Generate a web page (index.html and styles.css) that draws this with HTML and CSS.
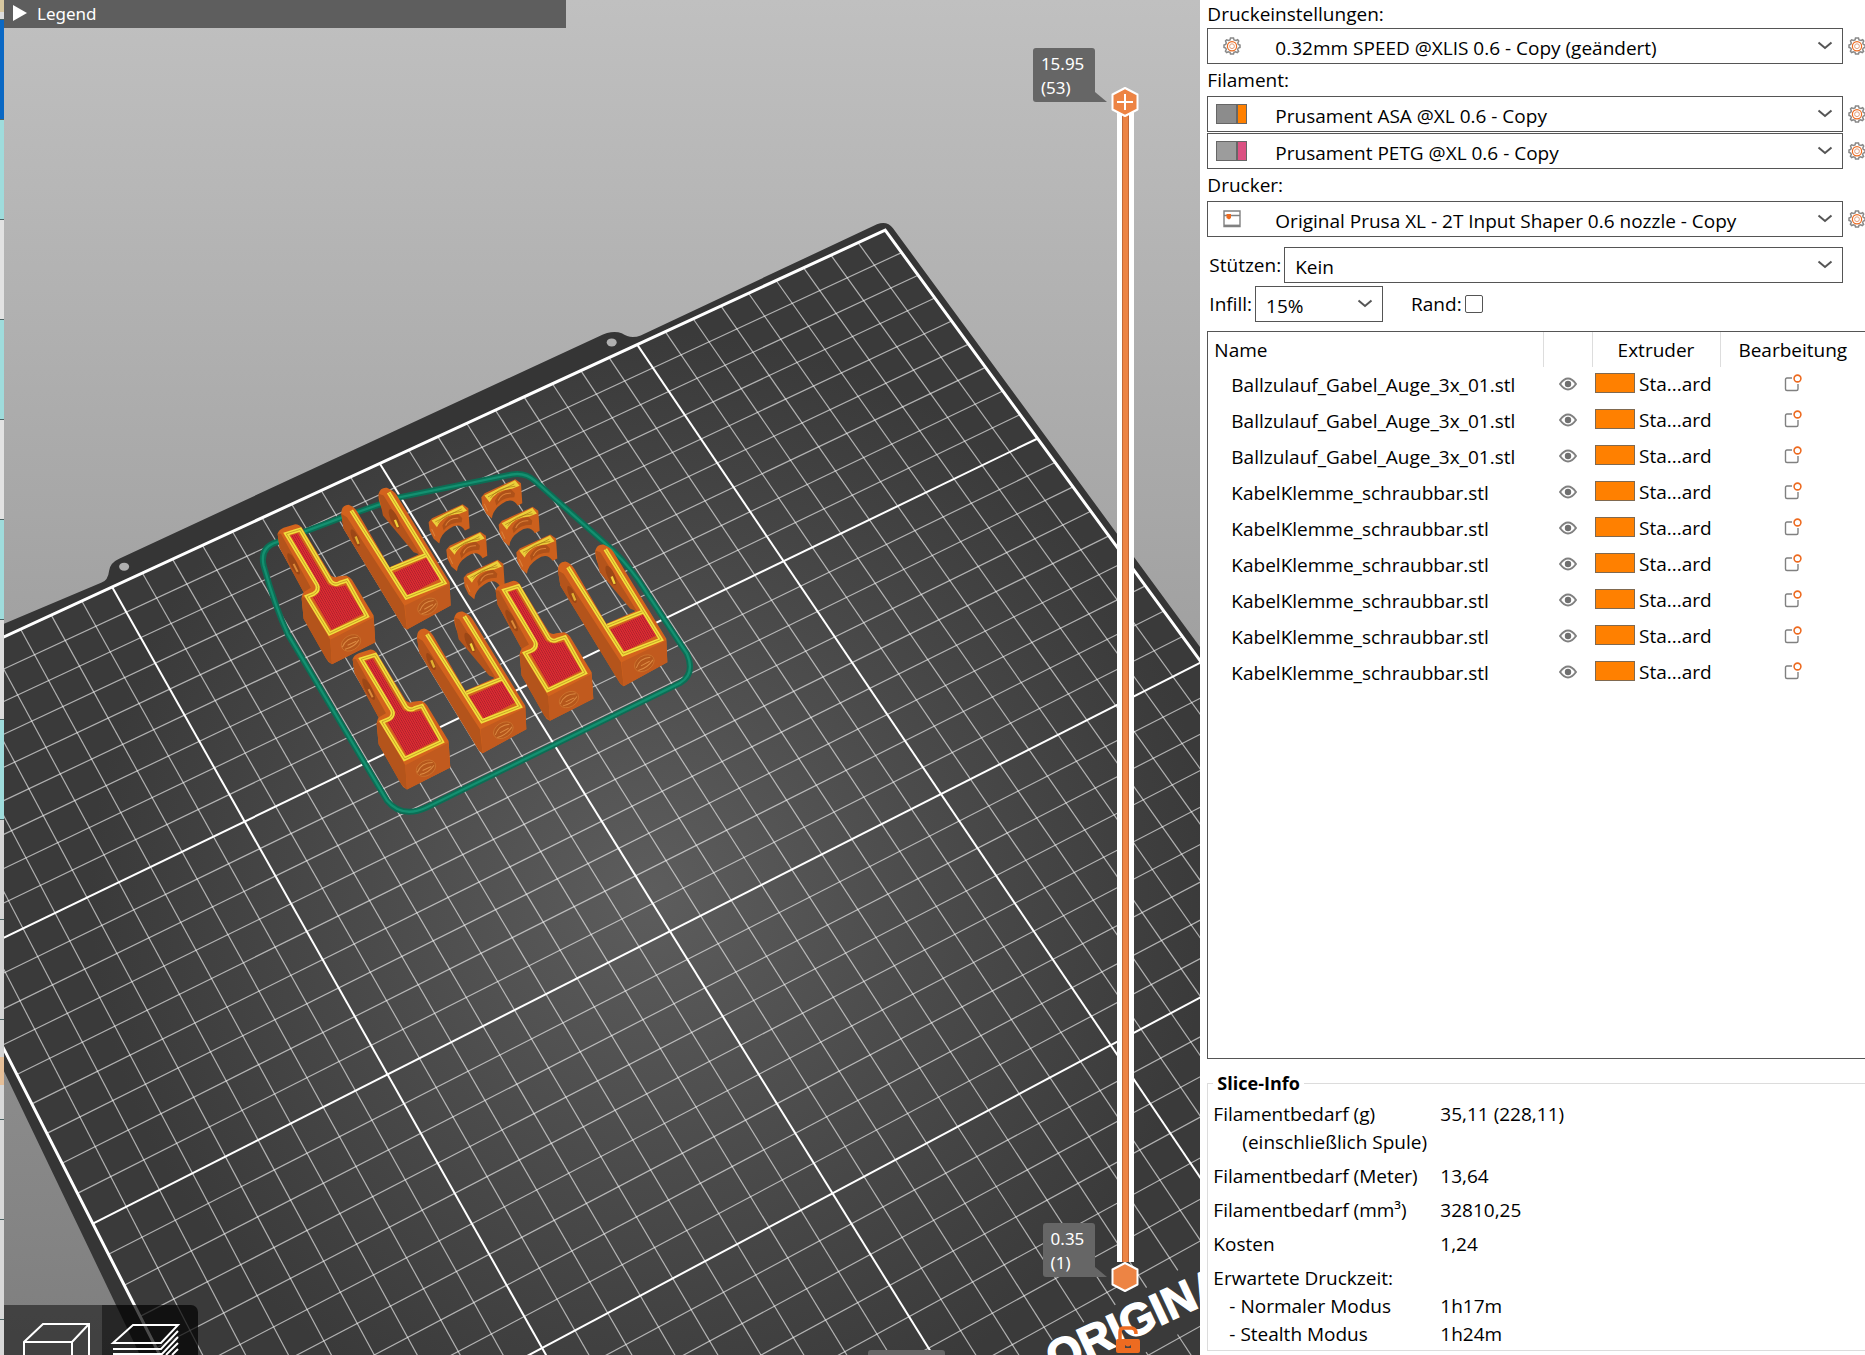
FILE: index.html
```html
<!DOCTYPE html>
<html lang="de">
<head>
    <meta charset="UTF-8">
    <meta name="viewport" content="width=device-width, initial-scale=1.0">
    <title>PrusaSlicer</title>
    <link rel="stylesheet" href="styles.css">
</head>
<body>
    <!-- shared icons -->
    <svg class="icon-defs" aria-hidden="true">
        <symbol id="gear" viewBox="0 0 18 18">
            <path d="M7 3 L7.500 1 h3 L11 3 L13 3.500 L14.700 2.700 L15.700 4 L14.800 6 L15.300 7.500 L17 8 v2.500 L15.300 11 L14.600 12.500 L15.600 14.300 L14.300 15.500 L12.500 14.700 L11 15.300 L10.500 17 h-3 L7 15.300 L5.400 14.700 L3.600 15.500 L2.400 14.200 L3.300 12.500 L2.700 11 L1 10.500 V8 L2.700 7.400 L3.300 6 L2.500 4 L3.600 2.800 L5.500 3.500 Z" fill="#fff" stroke="#888" stroke-width="1.500"/>
            <circle cx="9" cy="9.200" r="4.600" fill="none" stroke="#ed6b21" stroke-width="1.200"/>
            <circle cx="9" cy="9.200" r="2.400" fill="none" stroke="#e0a080" stroke-width="1"/>
        </symbol>
        <symbol id="printer" viewBox="0 0 18 18">
            <path d="M1 1 H17 V16.500 H1 Z M1 5.500 H17" fill="#fff" stroke="#808080" stroke-width="1.400"/>
            <path d="M1 15.800 H17" stroke="#808080" stroke-width="2.400"/>
            <path d="M3.500 4 H8 V8 L6 9.500 L3.500 8 Z" fill="#ed6b21"/>
        </symbol>
        <symbol id="chevron" viewBox="0 0 16 10">
            <path d="M1.500 1.500 L8 7 L14.500 1.500" fill="none" stroke="#555" stroke-width="2"/>
        </symbol>
        <symbol id="eye" viewBox="0 0 18 14">
            <path d="M1 7 Q9 -4 17 7 Q9 18 1 7 Z" fill="#fff" stroke="#808080" stroke-width="2"/>
            <circle cx="9" cy="7" r="3.200" fill="#707070"/>
        </symbol>
        <symbol id="edit" viewBox="0 0 18 18">
            <path d="M8 4 H3 Q1.500 4 1.500 5.500 V15 Q1.500 16.500 3 16.500 H12.500 Q14 16.500 14 15 V10" fill="none" stroke="#808080" stroke-width="1.400"/>
            <circle cx="13.500" cy="4.500" r="3.400" fill="#fff" stroke="#ed6b21" stroke-width="1.600"/>
        </symbol>
    </svg>

    <div class="app">
        <div class="behind"></div>

        <main class="viewport">
            <svg class="scene" viewBox="4 0 1195 1355" preserveAspectRatio="xMinYMin slice" role="img" aria-label="Druckbett">
                <defs>
                    <radialGradient id="bedShade" gradientUnits="userSpaceOnUse" cx="650" cy="890" r="560">
                        <stop offset="0" stop-color="#5d5d5d"/>
                        <stop offset="0.500" stop-color="#4b4b4b"/>
                        <stop offset="1" stop-color="#3a3a3a"/>
                    </radialGradient>
                    <pattern id="infill" width="6" height="6" patternUnits="userSpaceOnUse" patternTransform="rotate(-30)">
                        <rect width="6" height="6" fill="#dd2a33"/>
                        <rect width="2" height="6" fill="#a8242a"/>
                    </pattern>
                    <g id="tongue">
                        <path fill="#d3631d" d="M112 250 Q115 238 130 232 L165 221 Q178 222 185 232 L272 375 Q283 384 293 378 L318 375 Q330 380 335 388 L400 495 L405 575 L275 641 Q262 635 258 625 L190 505 L184 445 Q185 432 190 425 L118 292 Z"/>
                        <path fill="#b4541b" d="M112 250 L122 250 L212 412 L190 425 L118 292 Z M184 440 L195 442 L270 568 L275 641 L258 625 L190 505 Z"/>
                        <path fill="#c15a1e" d="M270 568 L400 500 L405 575 L275 641 Z"/>
                        <ellipse cx="160" cy="340" rx="10" ry="36" transform="rotate(-28 160 340)" fill="#9c4716"/>
                        <path d="M160 340 L172 364" stroke="#dc8a38" stroke-width="6"/>
                        <ellipse cx="332" cy="577" rx="31" ry="22" transform="rotate(-30 332 577)" fill="#b5571c" stroke="#d07a32" stroke-width="2"/>
                        <path d="M306 590 Q318 560 352 560 M314 596 Q342 590 356 568 M322 584 L348 572" fill="none" stroke="#dc8a42" stroke-width="3"/>
                        <path class="rim" d="M138 250 L180 237 L272 393 Q283 406 298 397 L320 390 L380 497 L268 549 L200 438 L220 430 Q238 420 230 402 Z"/>
                        <path class="rim-gap" d="M138 250 L180 237 L272 393 Q283 406 298 397 L320 390 L380 497 L268 549 L200 438 L220 430 Q238 420 230 402 Z"/>
                        <path fill="url(#infill)" d="M151 256 L172 248 L262 400 Q280 416 316 404 L368 490 L274 538 L217 440 Q242 432 240 408 Z"/>
                    </g>
                    <g id="fork">
                        <path fill="#d3631d" d="M303 190 Q302 165 325 163 Q342 168 352 185 L448 350 L535 312 L432 190 Q412 150 415 130 Q420 110 440 112 Q462 122 470 135 L628 395 L631 465 L500 537 L490 530 L310 235 Z"/>
                        <path fill="#b4541b" d="M303 190 L320 200 L492 465 L500 537 L490 530 L310 235 Z M415 130 L430 135 L540 312 L520 305 L428 195 Z"/>
                        <path fill="#c15a1e" d="M494 465 L628 400 L631 465 L500 537 Z"/>
                        <ellipse cx="345" cy="262" rx="9" ry="28" transform="rotate(-25 345 262)" fill="#9c4716"/>
                        <path d="M346 258 L355 280" stroke="#e0b030" stroke-width="7"/>
                        <ellipse cx="462" cy="205" rx="11" ry="32" transform="rotate(-25 462 205)" fill="#9c4716"/>
                        <path d="M464 208 L473 230" stroke="#f0d23a" stroke-width="7"/>
                        <ellipse cx="562" cy="468" rx="32" ry="22" transform="rotate(-32 562 468)" fill="#b5571c" stroke="#d07a32" stroke-width="2"/>
                        <path d="M538 482 Q548 452 580 450 M544 490 Q572 482 588 458 M552 476 L578 462" fill="none" stroke="#dc8a42" stroke-width="3"/>
                        <path fill="url(#infill)" d="M460 367 L562 321 L598 385 L503 434 Z"/>
                        <path class="rim" d="M333 180 L498 441 L612 397 L445 126 M452 356 L556 314"/>
                        <path class="rim-gap" d="M333 180 L498 441 L612 397 L445 126 M452 356 L556 314"/>
                    </g>
                    <g id="clamp">
                        <path fill="#cc601d" d="M723 140 L733 128 L825 86 L842 98 L846 158 L832 165 Q815 138 785 160 Q757 178 755 204 L738 190 L726 165 Z"/>
                        <path fill="#ae5119" d="M764 150 Q778 120 812 116 L824 128 L822 140 Q785 140 768 165 Z"/>
                        <path d="M774 150 Q784 126 812 128 M732 160 L742 182" stroke="#dc8038" stroke-width="3" fill="none"/>
                        <path fill="#ecd03a" d="M732 135 L824 89 L838 106 L815 115 Q765 118 748 155 Z"/>
                        <path d="M743 139 L822 100 M750 143 Q770 112 825 107" stroke="#a67414" stroke-width="2" fill="none"/>
                    </g>
                </defs>

                <path fill="#353535" d="M4 623 L101 582 Q108 580 109 570 Q110 562 119 558 L598 336 Q612 329 621 333 Q630 339 640 335 L876 224 Q886 220 892 228 L1134 558 L1200 648 V1356 H141 L4 1070 Z"/>
                <ellipse cx="124" cy="566" rx="5" ry="4" fill="#b0b0b0"/>
                <ellipse cx="611" cy="342" rx="5" ry="4" fill="#b0b0b0"/>
                <g id="grid"></g>
                <text class="bed-logo" transform="translate(1054 1373) rotate(-25)">ORIGINA</text>

                <g transform="translate(240 450) scale(0.333)">
                    <path class="skirt" d="M70 345 Q58 290 110 275 L300 203 L480 140 L815 72 Q855 65 885 92 L1085 270 Q1150 325 1195 390 L1340 610 Q1365 670 1320 697 L560 1070 Q485 1105 440 1050 L142 550 Q105 470 70 345 Z"/>
                    <path class="skirt-lines" d="M70 345 Q58 290 110 275 L300 203 L480 140 L815 72 Q855 65 885 92 L1085 270 Q1150 325 1195 390 L1340 610 Q1365 670 1320 697 L560 1070 Q485 1105 440 1050 L142 550 Q105 470 70 345 Z"/>
                    <use href="#clamp"/>
                    <use href="#clamp" x="-158" y="75"/>
                    <use href="#clamp" x="52" y="83"/>
                    <use href="#clamp" x="-105" y="158"/>
                    <use href="#clamp" x="105" y="166"/>
                    <use href="#clamp" x="-53" y="242"/>
                    <use href="#tongue"/>
                    <use href="#fork"/>
                    <use href="#tongue" x="654" y="170"/>
                    <use href="#fork" x="650" y="170"/>
                    <use href="#fork" x="227" y="371"/>
                    <use href="#tongue" x="225" y="376"/>
                </g>
            </svg>

            <details class="legend">
                <summary><span class="legend-arrow"></span>Legend</summary>
            </details>

            <div class="layers">
                <div class="track"></div>
                <input type="range" class="layer-range lower" min="1" max="53" value="1" aria-label="Untere Schicht">
                <input type="range" class="layer-range upper" min="1" max="53" value="53" aria-label="Obere Schicht">
                <output class="layer-tip tip-top">15.95<br>(53)</output>
                <output class="layer-tip tip-bottom">0.35<br>(1)</output>
            </div>
            <button class="unlock" aria-label="Entsperren">
                <svg viewBox="0 0 24 28">
                    <path d="M4 15 V6 Q4 2 8 2 H15 Q20 2 20 8" fill="none" stroke="#ed6b21" stroke-width="3.500"/>
                    <rect y="13" width="24" height="14" rx="2" fill="#ed6b21"/>
                    <path d="M9 19 q3 3 6 0 v3 h-6 Z" fill="#444"/>
                </svg>
            </button>
            <div class="moves-handle"></div>

            <div class="view-switch">
                <button aria-label="3D-Ansicht">
                    <svg viewBox="0 0 98 50"><path d="M20 50 V37 L39 19 H85 V50 M20 37 H68 V50 M68 37 L85 19"/></svg>
                </button>
                <button class="active" aria-label="Vorschau">
                    <svg viewBox="0 0 96 50"><path d="M11 38 L31 20 H76 L59 38 Z M11 44 H59 L76 26 M11 49 H60 L76 32 M64 50 L76 38 M70 50 L76 44"/></svg>
                </button>
            </div>
        </main>

        <aside class="sidebar">
            <label for="print">Druckeinstellungen:</label>
            <div class="preset">
                <div class="combo with-icon">
                    <svg class="combo-icon gear"><use href="#gear"/></svg>
                    <select id="print"><option>0.32mm SPEED @XLIS 0.6 - Copy (geändert)</option></select>
                    <svg class="chevron"><use href="#chevron"/></svg>
                </div>
                <button class="edit-preset" aria-label="Bearbeiten"><svg class="gear"><use href="#gear"/></svg></button>
            </div>

            <label for="filament1">Filament:</label>
            <div class="preset">
                <div class="combo with-icon">
                    <span class="combo-icon spool"></span>
                    <select id="filament1"><option>Prusament ASA @XL 0.6 - Copy</option></select>
                    <svg class="chevron"><use href="#chevron"/></svg>
                </div>
                <button class="edit-preset" aria-label="Bearbeiten"><svg class="gear"><use href="#gear"/></svg></button>
            </div>
            <div class="preset">
                <div class="combo with-icon">
                    <span class="combo-icon spool pink"></span>
                    <select id="filament2" aria-label="Filament 2"><option>Prusament PETG @XL 0.6 - Copy</option></select>
                    <svg class="chevron"><use href="#chevron"/></svg>
                </div>
                <button class="edit-preset" aria-label="Bearbeiten"><svg class="gear"><use href="#gear"/></svg></button>
            </div>

            <label for="printer-select">Drucker:</label>
            <div class="preset">
                <div class="combo with-icon">
                    <svg class="combo-icon printer"><use href="#printer"/></svg>
                    <select id="printer-select"><option>Original Prusa XL - 2T Input Shaper 0.6 nozzle - Copy</option></select>
                    <svg class="chevron"><use href="#chevron"/></svg>
                </div>
                <button class="edit-preset" aria-label="Bearbeiten"><svg class="gear"><use href="#gear"/></svg></button>
            </div>

            <div class="option-row supports">
                <label for="supports">Stützen:</label>
                <div class="combo">
                    <select id="supports"><option>Kein</option></select>
                    <svg class="chevron"><use href="#chevron"/></svg>
                </div>
            </div>
            <div class="option-row">
                <label for="infill-select">Infill:</label>
                <div class="combo small">
                    <select id="infill-select"><option>15%</option></select>
                    <svg class="chevron"><use href="#chevron"/></svg>
                </div>
                <label for="brim" class="brim-label">Rand:</label>
                <input type="checkbox" id="brim">
            </div>

            <div class="object-list">
                <table>
                    <colgroup><col><col class="col-eye"><col class="col-extruder"><col class="col-edit"></colgroup>
                    <thead>
                        <tr><th>Name</th><th></th><th>Extruder</th><th>Bearbeitung</th></tr>
                    </thead>
                    <tbody>
                        <tr><td>Ballzulauf_Gabel_Auge_3x_01.stl</td><td><svg class="eye"><use href="#eye"/></svg></td><td><span class="swatch"></span>Sta...ard</td><td><svg class="edit"><use href="#edit"/></svg></td></tr>
                        <tr><td>Ballzulauf_Gabel_Auge_3x_01.stl</td><td><svg class="eye"><use href="#eye"/></svg></td><td><span class="swatch"></span>Sta...ard</td><td><svg class="edit"><use href="#edit"/></svg></td></tr>
                        <tr><td>Ballzulauf_Gabel_Auge_3x_01.stl</td><td><svg class="eye"><use href="#eye"/></svg></td><td><span class="swatch"></span>Sta...ard</td><td><svg class="edit"><use href="#edit"/></svg></td></tr>
                        <tr><td>KabelKlemme_schraubbar.stl</td><td><svg class="eye"><use href="#eye"/></svg></td><td><span class="swatch"></span>Sta...ard</td><td><svg class="edit"><use href="#edit"/></svg></td></tr>
                        <tr><td>KabelKlemme_schraubbar.stl</td><td><svg class="eye"><use href="#eye"/></svg></td><td><span class="swatch"></span>Sta...ard</td><td><svg class="edit"><use href="#edit"/></svg></td></tr>
                        <tr><td>KabelKlemme_schraubbar.stl</td><td><svg class="eye"><use href="#eye"/></svg></td><td><span class="swatch"></span>Sta...ard</td><td><svg class="edit"><use href="#edit"/></svg></td></tr>
                        <tr><td>KabelKlemme_schraubbar.stl</td><td><svg class="eye"><use href="#eye"/></svg></td><td><span class="swatch"></span>Sta...ard</td><td><svg class="edit"><use href="#edit"/></svg></td></tr>
                        <tr><td>KabelKlemme_schraubbar.stl</td><td><svg class="eye"><use href="#eye"/></svg></td><td><span class="swatch"></span>Sta...ard</td><td><svg class="edit"><use href="#edit"/></svg></td></tr>
                        <tr><td>KabelKlemme_schraubbar.stl</td><td><svg class="eye"><use href="#eye"/></svg></td><td><span class="swatch"></span>Sta...ard</td><td><svg class="edit"><use href="#edit"/></svg></td></tr>
                    </tbody>
                </table>
            </div>

            <fieldset class="slice-info">
                <legend>Slice-Info</legend>
                <table>
                    <tr><th>Filamentbedarf (g)<br><span class="spool-note">(einschließlich Spule)</span></th><td>35,11 (228,11)</td></tr>
                    <tr><th>Filamentbedarf (Meter)</th><td>13,64</td></tr>
                    <tr><th>Filamentbedarf (mm³)</th><td>32810,25</td></tr>
                    <tr><th>Kosten</th><td>1,24</td></tr>
                    <tr class="tight"><th>Erwartete Druckzeit:</th><td></td></tr>
                    <tr class="tight"><th class="mode">- Normaler Modus</th><td>1h17m</td></tr>
                    <tr class="tight"><th class="mode">- Stealth Modus</th><td>1h24m</td></tr>
                </table>
            </fieldset>
        </aside>
    </div>

    <script src="bed.js"></script>
</body>
</html>
```
FILE: styles.css
```css
* {
    box-sizing: border-box;
}

body {
    margin: 0;
    font-family: 'Open Sans', 'Noto Sans', sans-serif;
    font-size: 19px;
    color: #000;
    background: #fff;
}

button {
    padding: 0;
    border: none;
    background: none;
    cursor: pointer;
}

.icon-defs {
    display: none;
}

.app {
    display: grid;
    grid-template-columns: 4px 9fr 5fr;
    height: 100vh;
    overflow: hidden;
}

/* edge of the window lying behind */
.behind {
    background:
        repeating-linear-gradient(transparent 0, transparent 19px, #4c6464 19px, #4c6464 20px, transparent 20px, transparent 100px),
        linear-gradient(#d8c8a0 0, #d8c8a0 12px, #ddd 12px, #ddd 20px, #0a68c4 20px, #0a68c4 120px,
            #9fdcdc 120px, #9fdcdc 220px, #e2e2e2 220px, #e2e2e2 320px, #9fdcdc 320px, #9fdcdc 420px,
            #e2e2e2 420px, #e2e2e2 520px, #9fdcdc 520px, #9fdcdc 620px, #dcdcdc 620px, #dcdcdc 720px,
            #9fdcdc 720px, #9fdcdc 820px, #d4d4d4 820px, #d4d4d4 1057px, #e6bf98 1057px, #e6bf98 1085px,
            #d8d8d8 1085px);
}

/* 3D view */
.viewport {
    position: relative;
    overflow: hidden;
    background: linear-gradient(#c0c0c0, #7e7e7e);
}

.scene {
    display: block;
    width: 100%;
    height: 100%;
}

.cell-line {
    stroke: #fff;
    stroke-width: 1.200;
    opacity: 0.6;
}

.major-line {
    stroke: #fff;
    stroke-width: 2;
}

.bed-border {
    fill: none;
    stroke: #fff;
    stroke-width: 3;
}

.bed-logo {
    font-family: 'Liberation Sans', Arial, sans-serif;
    font-weight: bold;
    font-size: 45px;
    fill: #fff;
    stroke: #fff;
    stroke-width: 1.500;
}

.skirt {
    fill: none;
    stroke: #0c6e55;
    stroke-width: 18;
}

.skirt-lines {
    fill: none;
    stroke: #139070;
    stroke-width: 7;
}

.rim {
    fill: none;
    stroke: #f2de3c;
    stroke-width: 12;
}

.rim-gap {
    fill: none;
    stroke: #b58a1c;
    stroke-width: 2;
}

.legend {
    position: absolute;
    top: 0;
    left: 0;
    width: 562px;
    max-width: 100%;
    background: #5e5e5e;
    color: #fff;
    font-family: 'Noto Sans', sans-serif;
    font-size: 17px;
}

.legend summary {
    display: flex;
    align-items: center;
    gap: 10px;
    height: 28px;
    padding: 0 0 2px 9px;
    cursor: pointer;
}

.legend-arrow {
    border-left: 14px solid #fff;
    border-top: 8px solid transparent;
    border-bottom: 8px solid transparent;
}

.layers {
    position: absolute;
    top: 87px;
    bottom: 63px;
    right: 60px;
    width: 30px;
}

.track {
    position: absolute;
    top: 15px;
    bottom: 30px;
    left: 7px;
    width: 17px;
    border: solid #fff;
    border-width: 0 5px;
    background: #ed8444;
    box-shadow: inset 1px 0 #c46a38, inset -1px 0 #c46a38;
}

.layer-range {
    position: absolute;
    inset: 0;
    width: 30px;
    height: 100%;
    margin: 0;
    appearance: none;
    background: none;
    writing-mode: vertical-lr;
    direction: rtl;
    pointer-events: none;
}

.layer-range::-webkit-slider-thumb {
    appearance: none;
    width: 30px;
    height: 30px;
    pointer-events: auto;
    background: url("data:image/svg+xml,%3Csvg xmlns='http://www.w3.org/2000/svg' viewBox='0 0 30 30'%3E%3Cpath d='M15 1 L27.500 7.500 V22.500 L15 29 L2.500 22.500 V7.500 Z' fill='%23ed8444' stroke='white' stroke-width='2' stroke-linejoin='round'/%3E%3C/svg%3E");
}

.upper::-webkit-slider-thumb {
    background: url("data:image/svg+xml,%3Csvg xmlns='http://www.w3.org/2000/svg' viewBox='0 0 30 30'%3E%3Cpath d='M15 1 L27.500 7.500 V22.500 L15 29 L2.500 22.500 V7.500 Z' fill='%23ed8444' stroke='white' stroke-width='2' stroke-linejoin='round'/%3E%3Cpath d='M7 15 H23 M15 7 V23' stroke='white' stroke-width='2'/%3E%3C/svg%3E");
}

.layer-tip {
    position: absolute;
    right: 45px;
    padding: 4px 11px 2px 8px;
    border-radius: 3px 3px 0 3px;
    background: #666;
    color: #fff;
    font-family: 'Noto Sans', sans-serif;
    font-size: 17px;
    line-height: 24px;
}

.layer-tip::after {
    content: '';
    position: absolute;
    left: 100%;
    bottom: 0;
    border-left: 12px solid #666;
    border-top: 10px solid transparent;
}

.tip-top {
    bottom: calc(100% - 15px);
}

.tip-bottom {
    bottom: 15px;
}

.unlock {
    position: absolute;
    right: 60px;
    bottom: 1px;
    width: 24px;
    height: 28px;
}

.unlock svg {
    display: block;
}

.moves-handle {
    position: absolute;
    bottom: 0;
    right: 255px;
    width: 77px;
    height: 5px;
    border-radius: 3px 3px 0 0;
    background: #666;
}

.view-switch {
    position: absolute;
    left: 0;
    bottom: 0;
    display: flex;
    height: 50px;
    border-radius: 0 7px 0 0;
    overflow: hidden;
}

.view-switch button {
    width: 98px;
    background: rgba(50, 50, 50, 0.8);
}

.view-switch .active {
    width: 96px;
    background: rgba(0, 0, 0, 0.7);
}

.view-switch svg {
    display: block;
    height: 50px;
    fill: none;
    stroke: #fff;
    stroke-width: 2;
}

/* Sidebar */
.sidebar {
    display: flex;
    flex-direction: column;
    padding-left: 7px;
    background: #fff;
    overflow: hidden;
}

.sidebar label {
    line-height: 28px;
}

.sidebar > label {
    margin-top: 1px;
    margin-bottom: 2px;
}

.sidebar > label:first-child {
    margin: 0;
}

.preset {
    display: flex;
    gap: 5px;
    margin-bottom: 1px;
}

.combo {
    position: relative;
    flex: 1;
}

.combo select {
    display: block;
    width: 100%;
    height: 36px;
    padding: 3px 32px 0 10px;
    border: 1px solid #555;
    border-radius: 0;
    background: #fff;
    appearance: none;
    color: #000;
    font: inherit;
}

.with-icon select {
    padding-left: 67px;
}

.combo-icon {
    position: absolute;
    pointer-events: none;
}

.gear {
    display: block;
    width: 18px;
    height: 18px;
}

.combo-icon.gear {
    left: 16px;
    top: 9px;
}

.combo-icon.printer {
    left: 16px;
    top: 9px;
    width: 18px;
    height: 18px;
}

.spool {
    left: 9px;
    top: 8px;
    width: 31px;
    height: 20px;
    border: 1px solid #666;
    background: linear-gradient(90deg, #8c8c8c 19px, #666 19px, #666 21px, #ff8000 21px);
}

.spool.pink {
    background: linear-gradient(90deg, #9c9c9c 19px, #666 19px, #666 21px, #db5182 21px);
}

.chevron {
    position: absolute;
    right: 10px;
    top: 13px;
    width: 16px;
    height: 10px;
    pointer-events: none;
}

.edit-preset {
    width: 17px;
    overflow: hidden;
}

.option-row {
    display: flex;
    align-items: center;
    padding-left: 2px;
    margin-bottom: 3px;
}

.option-row label {
    margin-right: 3px;
}

.supports {
    margin-top: 9px;
    padding-right: 22px;
}

.combo.small {
    flex: 0 0 128px;
}

.option-row .brim-label {
    margin-left: 28px;
}

#brim {
    width: 18px;
    height: 18px;
    margin: 0;
    border: 1px solid #555;
    border-radius: 2px;
    appearance: none;
    background: #fff;
}

.object-list {
    flex: 1;
    margin-top: 6px;
    border: 1px solid #555;
    border-right: none;
}

.object-list table {
    width: 100%;
    table-layout: fixed;
    border-collapse: collapse;
}

.col-eye {
    width: 49px;
}

.col-extruder {
    width: 128px;
}

.col-edit {
    width: 145px;
}

.object-list th {
    height: 35px;
    padding: 0;
    border-left: 1px solid #ddd;
    font-weight: normal;
    white-space: nowrap;
}

.object-list th:first-child {
    padding-left: 6px;
    border-left: none;
    text-align: left;
}

.object-list td {
    height: 36px;
    padding: 0;
    text-align: center;
    white-space: nowrap;
}

.object-list td:first-child {
    padding-left: 23px;
    text-align: left;
}

.object-list td:nth-child(3) {
    padding-left: 3px;
    text-align: left;
}

.object-list svg,
.swatch {
    vertical-align: middle;
    margin-bottom: 6px;
}

.eye {
    width: 18px;
    height: 14px;
}

.edit {
    width: 18px;
    height: 18px;
}

.swatch {
    display: inline-block;
    width: 40px;
    height: 20px;
    margin-right: 4px;
    border: 1px solid #80694f;
    background: #ff8000;
}

.slice-info {
    margin: 10px -2px 4px 0;
    padding: 0 5px 2px;
    border: 1px solid #dcdcdc;
}

.slice-info legend {
    padding: 0 4px;
    font-weight: bold;
    font-size: 18px;
    line-height: 28px;
}

.slice-info table {
    border-collapse: collapse;
    line-height: 28px;
}

.slice-info th {
    width: 227px;
    padding: 3px 0;
    font-weight: normal;
    text-align: left;
    vertical-align: top;
    white-space: nowrap;
}

.slice-info td {
    padding: 3px 0;
    vertical-align: top;
}

.slice-info .tight th,
.slice-info .tight td {
    padding-bottom: 0;
}

.slice-info .tight + .tight th,
.slice-info .tight + .tight td {
    padding-top: 0;
}

.spool-note {
    padding-left: 29px;
}

.slice-info .mode {
    padding-left: 16px;
}
```
FILE: bed.js
```js
const SVG_NS = 'http://www.w3.org/2000/svg';
const CELLS = 36;
const MAJOR = 9;
const grid = document.getElementById('grid');

// screen positions of the bed points (9,0) (27,0) (27,27) (9,27)
const corners = [[112, 586.3], [636.5, 344.2], [1109.5, 1044], [541.5, 1346.5]];

function makeProjection([p0, p1, p2, p3]) {
    const sx = p0[0] - p1[0] + p2[0] - p3[0];
    const sy = p0[1] - p1[1] + p2[1] - p3[1];
    const dx1 = p1[0] - p2[0], dy1 = p1[1] - p2[1];
    const dx2 = p3[0] - p2[0], dy2 = p3[1] - p2[1];
    const det = dx1 * dy2 - dx2 * dy1;
    const g = (sx * dy2 - dx2 * sy) / det;
    const h = (dx1 * sy - sx * dy1) / det;

    return function (u, v) {
        const s = (u - 9) / 18;
        const t = v / 27;
        const w = 1 + g * s + h * t;
        return [
            (p0[0] + (p1[0] - p0[0] + g * p1[0]) * s + (p3[0] - p0[0] + h * p3[0]) * t) / w,
            (p0[1] + (p1[1] - p0[1] + g * p1[1]) * s + (p3[1] - p0[1] + h * p3[1]) * t) / w
        ];
    };
}

const project = makeProjection(corners);

function addShape(className, points, close, fill) {
    const path = document.createElementNS(SVG_NS, 'path');
    path.setAttribute('class', className);
    path.setAttribute('d', 'M' + points.map(p => project(p[0], p[1]).map(n => n.toFixed(1)).join(' ')).join(' L') + (close ? ' Z' : ''));
    if (fill) path.setAttribute('fill', fill);
    grid.appendChild(path);
}

const square = [[0, 0], [CELLS, 0], [CELLS, CELLS], [0, CELLS]];
addShape('bed-surface', square, true, 'url(#bedShade)');

for (let i = 1; i < CELLS; i++) {
    const className = i % MAJOR === 0 ? 'major-line' : 'cell-line';
    // the lines leave a gap for the logo at the front edge
    addShape(className, [[i, 0], [i, 33.4]]);
    addShape(className, [[i, 34.9], [i, CELLS]]);
    if (i !== 34) addShape(className, [[0, i], [CELLS, i]]);
}

addShape('bed-border', square, true);
```
